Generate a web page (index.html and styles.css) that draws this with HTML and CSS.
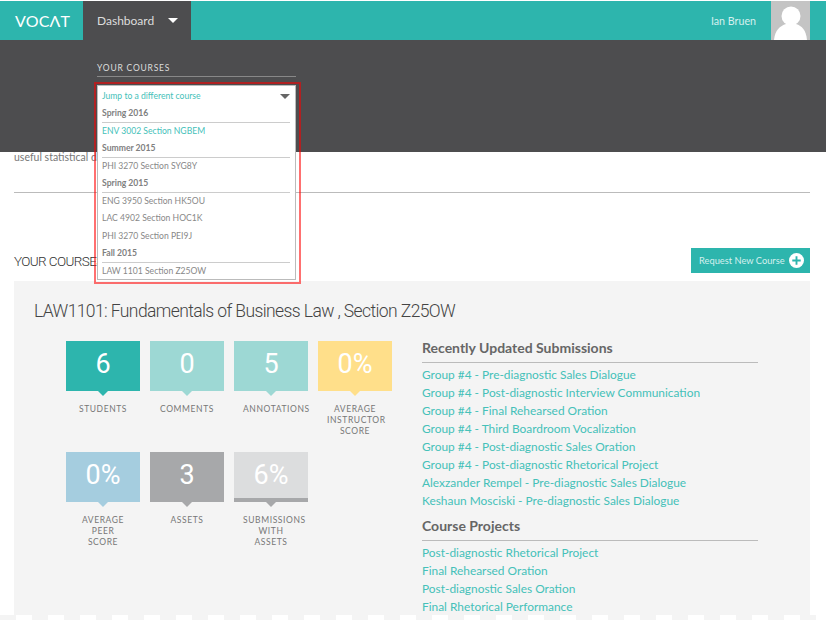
FILE: index.html
```html
<!DOCTYPE html>
<html lang="en">
<head>
  <meta charset="UTF-8">
  <title>VOCAT</title>
  <link rel="stylesheet" href="styles.css">
</head>
<body>
  <header class="topbar">
    <a class="logo">VOCΛT</a>
    <a class="nav-tab">Dashboard <span class="caret"></span></a>
    <div class="user">
      <span class="user-name">Ian Bruen</span>
      <span class="avatar">
        <svg viewBox="0 0 39 39" width="39" height="39">
          <circle cx="20" cy="15" r="9.5" fill="#fff"/>
          <path d="M3 39 C4 29 9 25 15 23 H25 C31 25 35 29 36 39 Z" fill="#fff"/>
        </svg>
      </span>
    </div>
  </header>

  <!-- Dashboard menu, open over the page -->
  <div class="menu">
    <div class="menu-title">Your courses</div>
    <div class="highlight">
      <div class="course-select">
        <div class="select-head">Jump to a different course <span class="select-caret"></span></div>
        <div class="group">Spring 2016</div>
        <div class="item active">ENV 3002 Section NGBEM</div>
        <div class="group">Summer 2015</div>
        <div class="item">PHI 3270 Section SYG8Y</div>
        <div class="group">Spring 2015</div>
        <div class="item">ENG 3950 Section HK5OU</div>
        <div class="item">LAC 4902 Section HOC1K</div>
        <div class="item">PHI 3270 Section PEI9J</div>
        <div class="group">Fall 2015</div>
        <div class="item">LAW 1101 Section Z25OW</div>
      </div>
    </div>
  </div>

  <main class="content">
    <p class="intro">useful statistical data.</p>
    <div class="section-head">
      <h2>Your courses</h2>
      <a class="request-btn">Request New Course
        <svg viewBox="0 0 16 16" width="15" height="15">
          <circle cx="8" cy="8" r="8" fill="#fff"/>
          <path d="M8 3.5 V12.5 M3.5 8 H12.5" stroke="#2db5ad" stroke-width="2"/>
        </svg>
      </a>
    </div>

    <section class="course-card">
      <h1>LAW1101: Fundamentals of Business Law , Section Z25OW</h1>
      <div class="card-body">
        <div class="stats">
          <div class="stat">
            <div class="tile teal">6</div>
            <div class="stat-label">Students</div>
          </div>
          <div class="stat">
            <div class="tile mint">0</div>
            <div class="stat-label">Comments</div>
          </div>
          <div class="stat">
            <div class="tile mint">5</div>
            <div class="stat-label">Annotations</div>
          </div>
          <div class="stat">
            <div class="tile yellow">0%</div>
            <div class="stat-label">Average Instructor Score</div>
          </div>
          <div class="stat">
            <div class="tile blue">0%</div>
            <div class="stat-label">Average Peer Score</div>
          </div>
          <div class="stat">
            <div class="tile grey">3</div>
            <div class="stat-label">Assets</div>
          </div>
          <div class="stat">
            <div class="tile light">6%</div>
            <div class="stat-label">Submissions With Assets</div>
          </div>
        </div>

        <div class="lists">
          <h3>Recently Updated Submissions</h3>
          <ul>
            <li><a>Group #4 - Pre-diagnostic Sales Dialogue</a></li>
            <li><a>Group #4 - Post-diagnostic Interview Communication</a></li>
            <li><a>Group #4 - Final Rehearsed Oration</a></li>
            <li><a>Group #4 - Third Boardroom Vocalization</a></li>
            <li><a>Group #4 - Post-diagnostic Sales Oration</a></li>
            <li><a>Group #4 - Post-diagnostic Rhetorical Project</a></li>
            <li><a>Alexzander Rempel - Pre-diagnostic Sales Dialogue</a></li>
            <li><a>Keshaun Mosciski - Pre-diagnostic Sales Dialogue</a></li>
          </ul>
          <h3>Course Projects</h3>
          <ul>
            <li><a>Post-diagnostic Rhetorical Project</a></li>
            <li><a>Final Rehearsed Oration</a></li>
            <li><a>Post-diagnostic Sales Oration</a></li>
            <li><a>Final Rhetorical Performance</a></li>
          </ul>
        </div>
      </div>
    </section>
  </main>

  <!-- Torn edge where the capture stops -->
  <div class="torn-edge"></div>
</body>
</html>
```

FILE: styles.css
```css
html, body {
  height: 620px;
  overflow: hidden;
}
body {
  margin: 0;
  padding-top: 1px;
  box-sizing: border-box;
  position: relative;
  background: #fff;
  font-family: Lato, "Liberation Sans", sans-serif;
  color: #666;
}
h1, h2, h3, p, ul {
  margin: 0;
  padding: 0;
}
ul {
  list-style: none;
}

/* Top bar */
.topbar {
  display: flex;
  align-items: stretch;
  height: 39px;
  background: #2db5ad;
}
.logo {
  width: 83px;
  box-sizing: border-box;
  padding-left: 15px;
  line-height: 39px;
  font-size: 16px;
  letter-spacing: 0.2px;
  color: #fff;
}
.nav-tab {
  display: flex;
  align-items: center;
  width: 108px;
  box-sizing: border-box;
  padding-left: 14px;
  background: #4d4d4f;
  color: #ddd;
  font-size: 12px;
}
.caret {
  margin-left: 14px;
  border-left: 5px solid transparent;
  border-right: 5px solid transparent;
  border-top: 5px solid #fff;
}
.user {
  display: flex;
  align-items: center;
  margin-left: auto;
  margin-right: 16px;
}
.user-name {
  margin-right: 15px;
  color: #d5f0ee;
  font-size: 10.7px;
}
.avatar {
  display: block;
  width: 39px;
  height: 39px;
  background: #c4c4c4;
}
.avatar svg {
  display: block;
}

/* Open menu */
.menu {
  position: absolute;
  top: 40px;
  left: 0;
  right: 0;
  height: 112px;
  background: #4d4d4f;
}
.menu-title {
  position: absolute;
  top: 22px;
  left: 97px;
  width: 199px;
  height: 14px;
  border-bottom: 1px solid #888;
  color: #ddd;
  font-size: 8.5px;
  line-height: 13px;
  letter-spacing: 0.8px;
  text-transform: uppercase;
}
.highlight {
  position: absolute;
  top: 42px;
  left: 94px;
  width: 201px;
  height: 196px;
  border: 2px solid rgba(255, 0, 0, 0.56);
  padding: 1px;
}
.course-select {
  width: 199px;
  height: 195px;
  box-sizing: border-box;
  padding: 1px 5px 0 4px;
  background: #fff;
  border: 1px solid #bbb;
  font-size: 8.6px;
  color: #888;
}
.select-head {
  display: flex;
  justify-content: space-between;
  align-items: center;
  height: 18px;
  color: #45c1b9;
}
.select-caret {
  border-left: 5px solid transparent;
  border-right: 5px solid transparent;
  border-top: 5px solid #666;
}
.group {
  height: 16.5px;
  line-height: 16px;
  font-weight: 700;
  color: #808080;
  border-bottom: 1px solid #ccc;
}
.item {
  height: 17.5px;
  line-height: 17.5px;
}
.item.active {
  color: #45c1b9;
}

/* Page */
.content {
  padding: 111px 16px 0 14px;
}
.intro {
  height: 41px;
  border-bottom: 1px solid #bbb;
  font-size: 10.5px;
  line-height: 12px;
  color: #777;
}
.section-head {
  display: flex;
  justify-content: space-between;
  align-items: center;
  margin-top: 55px;
  height: 25px;
}
.section-head h2 {
  font-family: Roboto, Lato, sans-serif;
  font-size: 13.5px;
  font-weight: 300;
  letter-spacing: -0.6px;
  color: #333;
  text-transform: uppercase;
}
.request-btn {
  display: flex;
  align-items: center;
  justify-content: space-between;
  width: 119px;
  height: 25px;
  box-sizing: border-box;
  padding: 0 6px 0 8px;
  background: #2db5ad;
  color: #d5f0ee;
  font-size: 9.3px;
  white-space: nowrap;
}

/* Course card */
.course-card {
  margin-top: 8px;
  height: 334px;
  background: #f4f4f4;
  padding: 18px 20px 0;
}
.course-card h1 {
  font-family: Roboto, Lato, sans-serif;
  font-size: 17.5px;
  font-weight: 300;
  letter-spacing: -0.6px;
  line-height: 24px;
  color: #444;
}
.card-body {
  display: flex;
  margin-top: 18px;
}
.stats {
  display: grid;
  grid-template-columns: repeat(4, 74px);
  grid-auto-rows: 111px;
  column-gap: 10px;
  margin-left: 32px;
  width: 356px;
}
.tile {
  position: relative;
  height: 50px;
  box-sizing: border-box;
  text-align: center;
  font-family: Roboto, Lato, sans-serif;
  font-size: 27px;
  line-height: 47px;
  color: #fff;
}
.tile::after {
  content: "";
  position: absolute;
  left: 32px;
  bottom: -5px;
  border-left: 5px solid transparent;
  border-right: 5px solid transparent;
  border-top: 5px solid #2db5ad;
}
.teal { background: #2db5ad; }
.mint { background: #9dd8d4; }
.yellow { background: #ffdf8a; }
.blue { background: #a5cddf; }
.grey { background: #a7a8aa; }
.light {
  background: #dcddde;
  border-bottom: 4px solid #a7a8aa;
}
.mint::after { border-top-color: #9dd8d4; }
.yellow::after { border-top-color: #ffdf8a; }
.blue::after { border-top-color: #a5cddf; }
.grey::after, .light::after { border-top-color: #a7a8aa; }
.light::after { bottom: -9px; }
/* narrower than a long word, which then runs out on the right */
.stat-label {
  width: 56px;
  margin: 13px 9px 0;
  text-align: center;
  font-size: 8.5px;
  line-height: 11px;
  letter-spacing: 0.6px;
  word-spacing: 8px;
  text-transform: uppercase;
  color: #777;
}
.lists {
  width: 336px;
}
.lists h3 {
  height: 21px;
  border-bottom: 1px solid #bbb;
  font-size: 14px;
  font-weight: 700;
  line-height: 14px;
  color: #666;
}
.lists ul {
  margin: 3px 0 9px;
}
.lists li {
  height: 18px;
  line-height: 18px;
  font-size: 11.9px;
  color: #45c1b9;
}

.torn-edge {
  position: absolute;
  left: 0;
  bottom: 0;
  width: 816px;
  height: 5px;
  background: repeating-linear-gradient(90deg, #f4f4f4 0, #f4f4f4 16px, #fff 16px, #fff 32px);
}
```
